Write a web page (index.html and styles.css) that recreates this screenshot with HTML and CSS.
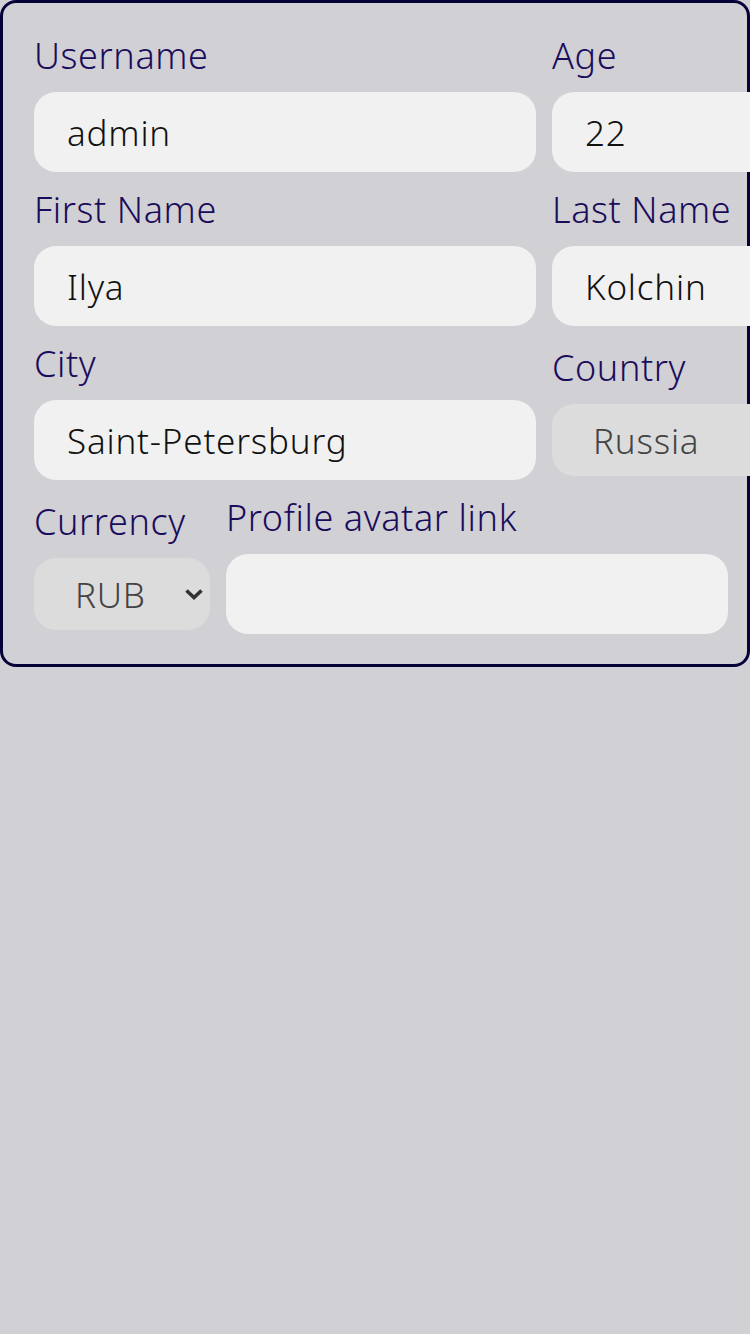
FILE: index.html
```html
<!DOCTYPE html>
<html lang="en">
<head>
<meta charset="utf-8">
<title>Profile</title>
<link rel="stylesheet" href="styles.css">
</head>
<body>
<form class="card">
  <div class="row">
    <div class="field wide">
      <label class="label">Username</label>
      <input class="input" value="admin">
    </div>
    <div class="field side">
      <label class="label">Age</label>
      <input class="input" value="22">
    </div>
  </div>
  <div class="row">
    <div class="field wide">
      <label class="label">First Name</label>
      <input class="input" value="Ilya">
    </div>
    <div class="field side">
      <label class="label">Last Name</label>
      <input class="input" value="Kolchin">
    </div>
  </div>
  <div class="row">
    <div class="field wide">
      <label class="label">City</label>
      <input class="input" value="Saint-Petersburg">
    </div>
    <div class="field side">
      <label class="label">Country</label>
      <input class="input disabled" value="Russia" disabled>
    </div>
  </div>
  <div class="row">
    <div class="field currency">
      <label class="label">Currency</label>
      <div class="select">
        <span>RUB</span>
        <svg class="chevron" width="20" height="12" viewBox="0 0 20 12"><path d="M2.5 2.5 L10 9.5 L17.5 2.5" fill="none" stroke="#333" stroke-width="3.6"/></svg>
      </div>
    </div>
    <div class="field wide">
      <label class="label">Profile avatar link</label>
      <input class="input" value="">
    </div>
  </div>
</form>
</body>
</html>
```

FILE: styles.css
```css
html, body {
  margin: 0;
  padding: 0;
  background: #d1d0d5;
  font-family: "Noto Sans", "DejaVu Sans", sans-serif;
}

.card {
  box-sizing: border-box;
  width: 750px;
  border: 3px solid #05023a;
  border-radius: 16px;
  padding: 31px 0 30px 31px;
  display: flex;
  flex-direction: column;
  gap: 16px;
}

.row {
  display: flex;
  align-items: center;
  gap: 16px;
}

.field {
  display: flex;
  flex-direction: column;
  gap: 14px;
  flex: none;
}

.wide { width: 502px; }
.side { width: 230px; }
.currency { width: 176px; }

.label {
  font-size: 36px;
  line-height: 44px;
  font-weight: 300;
  letter-spacing: 0.6px;
  color: #1a0c5a;
  white-space: nowrap;
}

.input {
  box-sizing: border-box;
  width: 100%;
  height: 80px;
  margin: 0;
  border: none;
  outline: none;
  border-radius: 22px;
  background: #f1f1f1;
  padding: 0 0 0 33px;
  font-family: inherit;
  font-size: 35px;
  font-weight: 300;
  letter-spacing: 0.8px;
  color: #111;
}

.input.disabled {
  height: 72px;
  background: #dcdcdc;
  color: #444;
  padding-left: 41px;
}

.select {
  box-sizing: border-box;
  height: 72px;
  border-radius: 22px;
  background: #dcdcdc;
  padding: 0 6px 0 41px;
  display: flex;
  align-items: center;
  justify-content: space-between;
  font-size: 35px;
  font-weight: 300;
  letter-spacing: 0.8px;
  color: #444;
}

.chevron { display: block; }
```
